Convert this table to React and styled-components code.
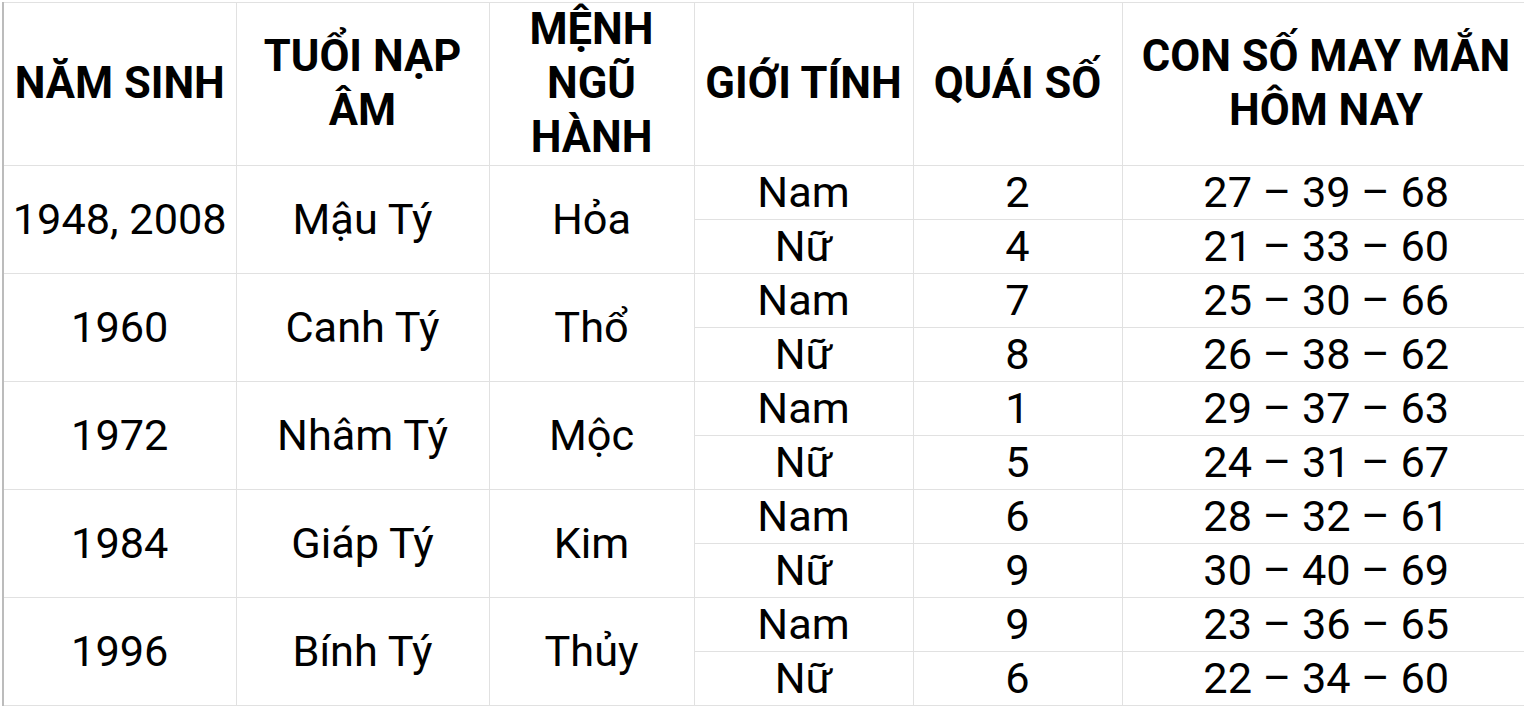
import React from 'react';
import styled, { createGlobalStyle } from 'styled-components';

const GlobalStyle = createGlobalStyle`
  html, body {
    margin: 0;
    padding: 0;
    background: #ffffff;
    overflow: hidden;
  }
  body {
    font-family: Roboto, "Noto Sans", "Liberation Sans", sans-serif;
    color: #000000;
  }
`;

const Sheet = styled.div`
  padding: 2px 0 0 2px;
  width: 1540px;
`;

const Table = styled.table`
  border-collapse: collapse;
  table-layout: fixed;
  width: 1527px;
  border-left: 2px solid #bcbcbc;
`;

const HeadRow = styled.tr`
  height: 163px;
`;

const Row = styled.tr`
  height: 54px;
`;

const HeadCell = styled.th`
  border: 1px solid #e1e1e1;
  padding: 0 3px;
  font-size: 43.5px;
  font-weight: 700;
  line-height: 54px;
  text-align: center;
  vertical-align: middle;
`;

const Cell = styled.td`
  border: 1px solid #e1e1e1;
  border-right: ${(p) => (p.$last ? 'none' : '1px solid #e1e1e1')};
  padding: 0 3px;
  font-size: 43.3px;
  font-weight: 400;
  line-height: 52px;
  text-align: center;
  vertical-align: middle;
  white-space: nowrap;
`;

const widths = [233, 253, 205, 219, 209, 408];

const headers = [
  'NĂM SINH',
  'TUỔI NẠP ÂM',
  'MỆNH NGŨ HÀNH',
  'GIỚI TÍNH',
  'QUÁI SỐ',
  'CON SỐ MAY MẮN HÔM NAY',
];

const groups = [
  {
    year: '1948, 2008',
    napAm: 'Mậu Tý',
    menh: 'Hỏa',
    rows: [
      ['Nam', '2', '27 – 39 – 68'],
      ['Nữ', '4', '21 – 33 – 60'],
    ],
  },
  {
    year: '1960',
    napAm: 'Canh Tý',
    menh: 'Thổ',
    rows: [
      ['Nam', '7', '25 – 30 – 66'],
      ['Nữ', '8', '26 – 38 – 62'],
    ],
  },
  {
    year: '1972',
    napAm: 'Nhâm Tý',
    menh: 'Mộc',
    rows: [
      ['Nam', '1', '29 – 37 – 63'],
      ['Nữ', '5', '24 – 31 – 67'],
    ],
  },
  {
    year: '1984',
    napAm: 'Giáp Tý',
    menh: 'Kim',
    rows: [
      ['Nam', '6', '28 – 32 – 61'],
      ['Nữ', '9', '30 – 40 – 69'],
    ],
  },
  {
    year: '1996',
    napAm: 'Bính Tý',
    menh: 'Thủy',
    rows: [
      ['Nam', '9', '23 – 36 – 65'],
      ['Nữ', '6', '22 – 34 – 60'],
    ],
  },
];

const App = () => {
  return (
    <Sheet>
      <GlobalStyle />
      <Table>
        <colgroup>
          {widths.map((w, i) => (
            <col key={i} style={{ width: w }} />
          ))}
        </colgroup>
        <thead>
          <HeadRow>
            {headers.map((h) => (
              <HeadCell key={h}>{h}</HeadCell>
            ))}
          </HeadRow>
        </thead>
        <tbody>
          {groups.map((g) =>
            g.rows.map(([gender, quai, lucky], i) => (
              <Row key={g.year + gender}>
                {i === 0 && (
                  <>
                    <Cell rowSpan={2}>{g.year}</Cell>
                    <Cell rowSpan={2}>{g.napAm}</Cell>
                    <Cell rowSpan={2}>{g.menh}</Cell>
                  </>
                )}
                <Cell>{gender}</Cell>
                <Cell>{quai}</Cell>
                <Cell $last>{lucky}</Cell>
              </Row>
            ))
          )}
        </tbody>
      </Table>
    </Sheet>
  );
};

export default App;
